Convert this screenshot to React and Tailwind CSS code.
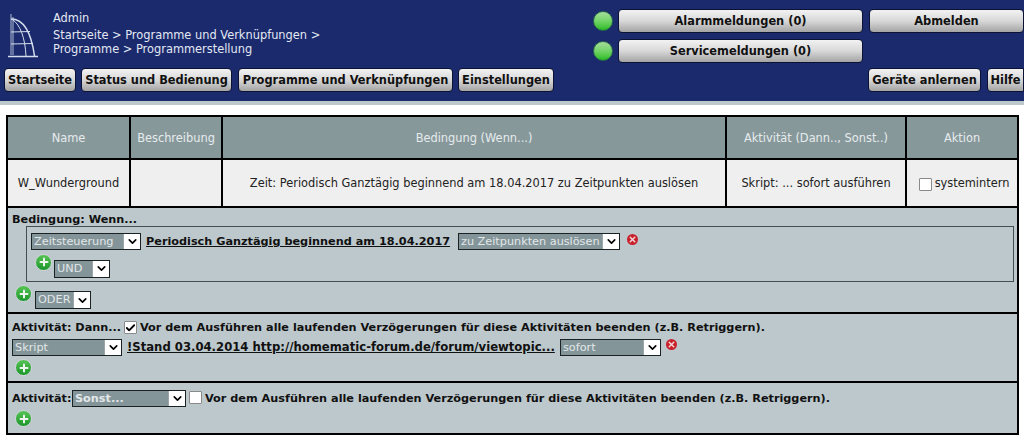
import React from "react";
import { ChevronDown, Check, Plus, X } from "lucide-react";

const font = "font-['DejaVu_Sans',Verdana,sans-serif]";

const NavButton = ({ children, className = "" }) => (
  <div className={`h-[24px] pt-[1px] flex items-center justify-center rounded-[4px] border border-[#0c1233] bg-gradient-to-b from-[#f2f2f2] via-[#d8d8d8] to-[#a4a4a4] text-[11.4px] font-bold text-[#111] whitespace-nowrap ${className}`}>
    {children}
  </div>
);

const Led = () => (
  <div className="w-[20px] h-[20px] rounded-full border border-[#2a6a4a] bg-gradient-to-b from-[#a4dc9c] via-[#72d466] to-[#22bb1e]" />
);

const Logo = () => (
  <svg width="36" height="46" viewBox="0 0 36 46" fill="none" stroke="#d5deee" strokeWidth="1" className="mt-[13px]">
    <path d="M6 1 L6 42 M8 4 L8 42" strokeOpacity="0.8" />
    <path d="M6 6 C18 6 26 18 29.500 43" strokeWidth="1.500" />
    <path d="M8 7 C15 12 20 24 21 43" />
    <path d="M6 19 L25 18.500 M6 31 L28 30.500" />
    <path d="M3 43.500 L33 43.500" strokeWidth="1.500" />
  </svg>
);

const Select = ({ label, w, h = 17, bold = false, className = "" }) => (
  <div className={`flex border border-[#1a2224] bg-[#84959a] shrink-0 ${className}`} style={{ width: w, height: h }}>
    <span className={`flex-1 pl-[2px] text-[11.25px] leading-[15px] text-[#e2e7e8] overflow-hidden whitespace-nowrap ${bold ? "font-bold" : "font-normal"}`}>{label}</span>
    <span className="w-[17px] h-full flex items-center justify-center bg-white border-l border-[#9aa6a8]">
      <ChevronDown className="w-[13px] h-[13px] text-black" strokeWidth={3} />
    </span>
  </div>
);

const AddIcon = () => (
  <div className="w-[17px] h-[17px] rounded-full bg-gradient-to-b from-[#55c455] to-[#16962a] border border-[#cfd6d8] flex items-center justify-center shrink-0">
    <Plus className="w-[12px] h-[12px] text-[#eef5ee]" strokeWidth={4} />
  </div>
);

const RemoveIcon = ({ className = "" }) => (
  <div className={`w-[11px] h-[11px] rounded-full bg-[#c8202c] flex items-center justify-center shrink-0 ${className}`}>
    <X className="w-[9px] h-[9px] text-[#f3d5d5]" strokeWidth={4} />
  </div>
);

const Box = ({ checked, className = "" }) => (
  <div className={`w-[13px] h-[13px] shrink-0 rounded-[1px] border border-[#8a8a8a] bg-white flex items-center justify-center ${className}`}>
    {checked && <Check className="w-[12px] h-[12px] text-black" strokeWidth={4} />}
  </div>
);

const HeadCell = ({ children }) => (
  <div className="pt-[2px] flex items-center justify-center bg-[#87989b] text-[11.4px] text-[#e6ebec]">{children}</div>
);

const BodyCell = ({ className = "", children }) => (
  <div className={`pt-[2px] flex items-center justify-center bg-[#efefef] text-[11.4px] text-[#222] ${className}`}>{children}</div>
);

const columns = "grid grid-cols-[121px_90px_502px_178px_1fr] gap-[2px]";
const retrigger = "Vor dem Ausführen alle laufenden Verzögerungen für diese Aktivitäten beenden (z.B. Retriggern).";

export default function App() {
  return (
    <div className={`w-[1024px] h-[438px] overflow-hidden bg-white ${font}`}>
      {/* Header */}
      <div className="h-[101px] bg-[#1a2a6c] flex flex-col">
        <div className="h-[68px] flex justify-between">
          <div className="flex pl-[5px]">
            <Logo />
            <div className="pl-[12px] pt-[11px] text-[11.4px] leading-[14px] text-[#e3e8f3] w-[300px]">
              <div className="mb-[3px]">Admin</div>
              <div>Startseite &gt; Programme und Verknüpfungen &gt;</div>
              <div>Programme &gt; Programmerstellung</div>
            </div>
          </div>
          <div className="w-[431px] pt-[9px] flex flex-col gap-[6px]">
            <div className="flex items-center">
              <Led />
              <NavButton className="w-[245px] ml-[5px]">Alarmmeldungen (0)</NavButton>
              <NavButton className="flex-1 ml-[6px]">Abmelden</NavButton>
            </div>
            <div className="flex items-center">
              <Led />
              <NavButton className="w-[245px] ml-[5px]">Servicemeldungen (0)</NavButton>
            </div>
          </div>
        </div>
        <div className="flex justify-between pl-[4px]">
          <div className="flex">
            <NavButton className="w-[72px]">Startseite</NavButton>
            <NavButton className="w-[151px] ml-[5px]">Status und Bedienung</NavButton>
            <NavButton className="w-[215px] ml-[6px]">Programme und Verknüpfungen</NavButton>
            <NavButton className="w-[96px] ml-[5px]">Einstellungen</NavButton>
          </div>
          <div className="flex gap-[6px]">
            <NavButton className="w-[113px]">Geräte anlernen</NavButton>
            <NavButton className="w-[37px] rounded-r-none">Hilfe</NavButton>
          </div>
        </div>
      </div>
      <div className="h-[4px] bg-[#bcc8cc]" />

      {/* Table */}
      <div className="mx-[6px] mt-[10px] w-[1013px] bg-black p-[2px] flex flex-col gap-[2px]">
        <div className={`${columns} h-[41px]`}>
          <HeadCell>Name</HeadCell>
          <HeadCell>Beschreibung</HeadCell>
          <HeadCell>Bedingung (Wenn...)</HeadCell>
          <HeadCell>Aktivität (Dann.., Sonst..)</HeadCell>
          <HeadCell>Aktion</HeadCell>
        </div>
        <div className={`${columns} h-[46px]`}>
          <BodyCell>W_Wunderground</BodyCell>
          <BodyCell />
          <BodyCell>Zeit: Periodisch Ganztägig beginnend am 18.04.2017 zu Zeitpunkten auslösen</BodyCell>
          <BodyCell>Skript: ... sofort ausführen</BodyCell>
          <BodyCell className="gap-[3px] pl-[4px]"><Box />systemintern</BodyCell>
        </div>

        {/* Bedingung */}
        <div className="h-[104px] bg-[#bcc8cc] pl-[4px] pr-[3px] pt-[4px] text-[11.25px] font-bold text-[#111]">
          <div className="leading-[15px] -mb-[1px]">Bedingung: Wenn...</div>
          <div className="ml-[14px] h-[56px] border border-[#444d50] pl-[4px] pt-[6px]">
            <div className="flex items-center">
              <Select label="Zeitsteuerung" w={110} />
              <span className="ml-[5px] pt-[1px] w-[312px] shrink-0 underline whitespace-nowrap">Periodisch Ganztägig beginnend am 18.04.2017</span>
              <Select label="zu Zeitpunkten auslösen" w={162} />
              <RemoveIcon className="ml-[7px] -mt-[5px]" />
            </div>
            <div className="flex ml-[4px] mt-[3px]">
              <AddIcon />
              <Select label="UND" w={56} h={18} className="mt-[6px] ml-[2px]" />
            </div>
          </div>
          <div className="flex ml-[3px] mt-[3px]">
            <AddIcon />
            <Select label="ODER" w={56} h={18} className="mt-[6px] ml-[3px]" />
          </div>
        </div>

        {/* Dann */}
        <div className="h-[67px] bg-[#bcc8cc] px-[4px] pt-[6px] text-[11.25px] font-bold text-[#111]">
          <div className="flex items-center h-[15px] whitespace-nowrap">
            <span className="w-[112px] pt-[1px] shrink-0">Aktivität: Dann...</span>
            <Box checked />
            <span className="ml-[3px] pt-[1px]">{retrigger}</span>
          </div>
          <div className="flex items-center mt-[3px]">
            <Select label="Skript" w={110} />
            <span className="ml-[5px] pt-[1px] w-[433px] shrink-0 text-[11.65px] underline whitespace-nowrap">!Stand 03.04.2014 http://homematic-forum.de/forum/viewtopic...</span>
            <Select label="sofort" w={101} />
            <RemoveIcon className="ml-[5px] -mt-[5px]" />
          </div>
          <div className="mt-[3px] ml-[3px]"><AddIcon /></div>
        </div>

        {/* Sonst */}
        <div className="h-[50px] bg-[#bcc8cc] px-[4px] pt-[7px] text-[11.25px] font-bold text-[#111]">
          <div className="flex items-center h-[17px] whitespace-nowrap">
            <span className="w-[60px] pt-[1px] shrink-0">Aktivität:</span>
            <Select label="Sonst..." w={114} bold />
            <Box className="ml-[3px] -mt-[2px]" />
            <span className="ml-[3px] pt-[1px]">{retrigger}</span>
          </div>
          <div className="mt-[3px] ml-[3px]"><AddIcon /></div>
        </div>
      </div>
    </div>
  );
}
